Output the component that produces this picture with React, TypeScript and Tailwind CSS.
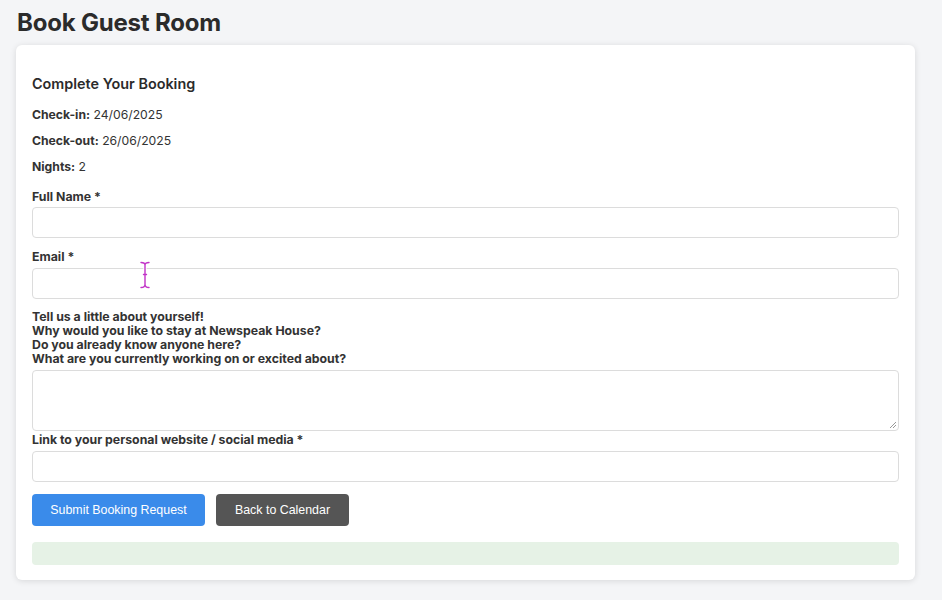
import React from "react";

export default function App() {
  const label = "block text-[12.3px] leading-[16px] font-bold text-[#333]";
  const input = "block w-full h-[31px] rounded-[4px] border border-[#dcdcdc] bg-white";
  return (
    <div className="min-h-[600px] w-full bg-[#f4f5f7] font-['Inter',sans-serif] text-[#333] pl-4 pr-[27px] relative">
      <h1 className="pt-[8px] text-[24px] leading-[30px] font-bold text-[#2b2b2b] tracking-[-0.2px] pl-[1px]">Book Guest Room</h1>
      <div className="mt-[7px] bg-white rounded-[6px] shadow-[0_1px_6px_rgba(0,0,0,0.12)] px-4 pt-[29px] pb-[15px]">
        <h3 className="text-[14.4px] leading-[20px] font-semibold text-[#2b2b2b] mb-[13px]">Complete Your Booking</h3>
        <div className="flex flex-col gap-[10px] text-[12.2px] leading-[16px]">
          <p><span className="font-bold">Check-in:</span> 24/06/2025</p>
          <p><span className="font-bold">Check-out:</span> 26/06/2025</p>
          <p><span className="font-bold">Nights:</span> 2</p>
        </div>
        <div className="mt-[14px]">
          <label className={label}>Full Name *</label>
          <div className={input + " mt-[2px]"} />
        </div>
        <div className="mt-[11px]">
          <label className={label}>Email *</label>
          <div className={input + " mt-[3px] h-[30px]"} />
        </div>
        <div className="mt-[11px]">
          <label className="block text-[12.3px] leading-[14px] font-bold text-[#333]">
            Tell us a little about yourself!<br />
            Why would you like to stay at Newspeak House?<br />
            Do you already know anyone here?<br />
            What are you currently working on or excited about?
          </label>
          <div className="relative mt-[4px] h-[61px] w-full rounded-[4px] border border-[#dcdcdc] bg-white">
            <svg className="absolute right-[1px] bottom-[1px]" width="8" height="8" viewBox="0 0 8 8">
              <path d="M7 1 L1 7 M7 4 L4 7" stroke="#999" strokeWidth="1" />
            </svg>
          </div>
        </div>
        <div className="mt-[1px]">
          <label className={label}>Link to your personal website / social media *</label>
          <div className={input + " mt-[3px]"} />
        </div>
        <div className="mt-[12px] flex gap-[11px] font-['Liberation_Sans',Arial,sans-serif] text-[12.4px]">
          <button className="h-[32px] w-[173px] rounded-[4px] bg-[#3a8bea] text-white">Submit Booking Request</button>
          <button className="h-[32px] w-[133px] rounded-[4px] bg-[#555555] text-white">Back to Calendar</button>
        </div>
        <div className="mt-[16px] h-[23px] rounded-[4px] bg-[#e6f2e6]" />
      </div>
      <svg className="absolute left-[139px] top-[261px]" width="12" height="28" viewBox="0 0 12 28">
        <path d="M2 1.5 Q6 1.5 6 4 Q6 1.5 10 1.5 M6 4 V23.5 M2 26.5 Q6 26.5 6 23.5 Q6 26.5 10 26.5 M4 13.5 H8" stroke="white" strokeWidth="3.2" fill="none" strokeLinecap="round" />
        <path d="M2 1.5 Q6 1.5 6 4 Q6 1.5 10 1.5 M6 4 V23.5 M2 26.5 Q6 26.5 6 23.5 Q6 26.5 10 26.5 M4.5 13.5 H7.5" stroke="#c234c8" strokeWidth="1.4" fill="none" strokeLinecap="round" />
      </svg>
    </div>
  );
}
